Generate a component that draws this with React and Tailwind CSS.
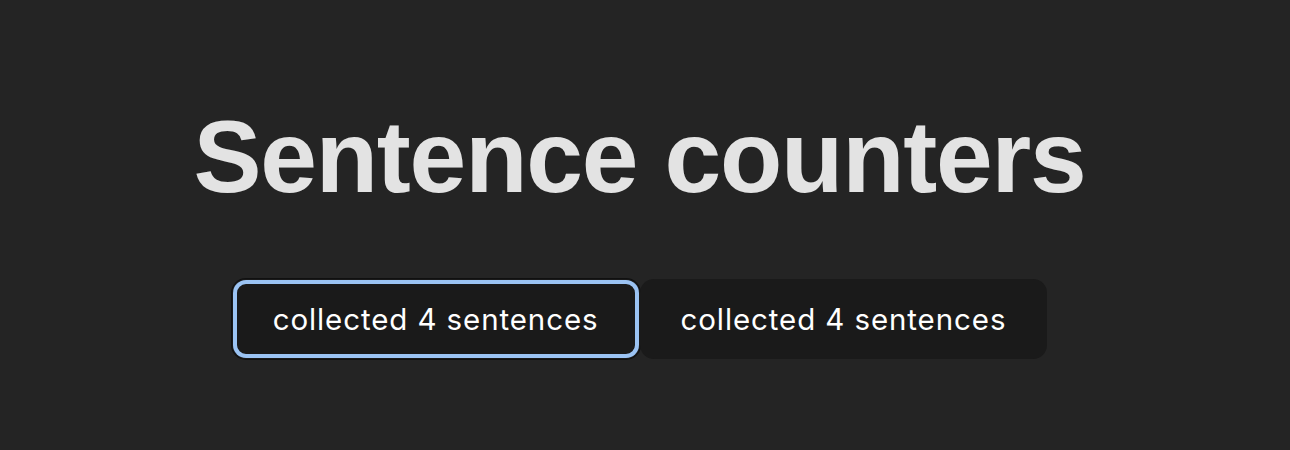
export default function App() {
  return (
    <div className="min-h-[450px] bg-[#242424] pr-[11px] text-center">
      <h1 className="pt-[101px] font-['Liberation_Sans',Arial,sans-serif] text-[102px] leading-[112px] font-bold tracking-[-1.2px] text-[#e3e3e3]">
        Sentence counters
      </h1>
      <div className="mt-[66px] flex justify-center">
        <button className="rounded-[14px] border border-transparent bg-[#1a1a1a] px-[40px] py-[17px] font-['Inter',sans-serif] text-[29.5px] leading-[44px] font-normal tracking-[0.9px] text-white shadow-[inset_0_0_0_4px_#9bc3f3,0_0_0_1px_#101010]">
          collected 4 sentences
        </button>
        <button className="rounded-[14px] border border-transparent bg-[#1a1a1a] px-[40px] py-[17px] font-['Inter',sans-serif] text-[29.5px] leading-[44px] font-normal tracking-[0.9px] text-white">
          collected 4 sentences
        </button>
      </div>
    </div>
  )
}
